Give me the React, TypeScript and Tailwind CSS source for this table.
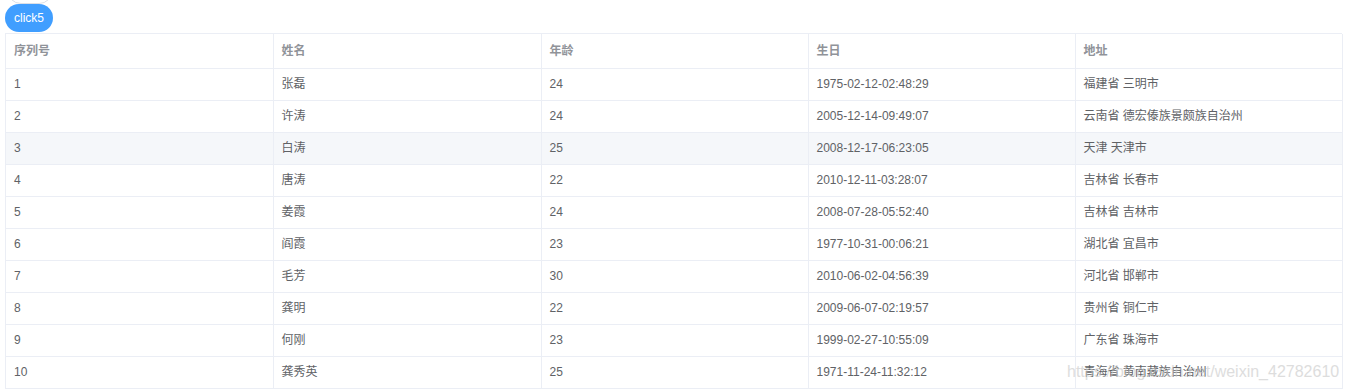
import React from "react";

const rows = [
  ["1", "张磊", "24", "1975-02-12-02:48:29", "福建省 三明市"],
  ["2", "许涛", "24", "2005-12-14-09:49:07", "云南省 德宏傣族景颇族自治州"],
  ["3", "白涛", "25", "2008-12-17-06:23:05", "天津 天津市"],
  ["4", "唐涛", "22", "2010-12-11-03:28:07", "吉林省 长春市"],
  ["5", "姜霞", "24", "2008-07-28-05:52:40", "吉林省 吉林市"],
  ["6", "阎霞", "23", "1977-10-31-00:06:21", "湖北省 宜昌市"],
  ["7", "毛芳", "30", "2010-06-02-04:56:39", "河北省 邯郸市"],
  ["8", "龚明", "22", "2009-06-07-02:19:57", "贵州省 铜仁市"],
  ["9", "何刚", "23", "1999-02-27-10:55:09", "广东省 珠海市"],
  ["10", "龚秀英", "25", "1971-11-24-11:32:12", "青海省 黄南藏族自治州"],
];

const headers = ["序列号", "姓名", "年龄", "生日", "地址"];

export default function App() {
  return (
    <div
      className="relative w-[1347px] h-[391px] bg-white overflow-hidden"
      style={{ fontFamily: '"Liberation Sans", "Noto Sans CJK SC", sans-serif' }}
    >
      <div className="ml-[7px] h-[4px] overflow-hidden flex items-end">
        <div className="w-[46px] h-[28px] shrink-0 rounded-full border border-[#dcdfe6] bg-white" />
      </div>
      <div className="ml-[5px]">
        <button className="h-[28px] w-[48px] rounded-full bg-[#409eff] text-white text-[12px] leading-none flex items-center justify-center">
          click5
        </button>
      </div>
      <div className="ml-[5px] mt-[1px] w-[1337px] border-l border-t border-[#ebeef5]">
        <table className="table-fixed border-collapse w-full text-[12px]">
          <colgroup>
            <col className="w-[267px]" />
            <col className="w-[268px]" />
            <col className="w-[267px]" />
            <col className="w-[267px]" />
            <col className="w-[267px]" />
          </colgroup>
          <thead>
            <tr className="h-[34px]">
              {headers.map((h) => (
                <th
                  key={h}
                  className="text-left font-bold text-[#909399] pl-[8px] border-r border-b border-[#ebeef5] align-middle"
                >
                  {h}
                </th>
              ))}
            </tr>
          </thead>
          <tbody>
            {rows.map((r, i) => (
              <tr key={i} className={`h-[32px] ${i === 2 ? "bg-[#f5f7fa]" : "bg-white"}`}>
                {r.map((c, j) => (
                  <td
                    key={j}
                    className="text-left text-[#606266] pl-[8px] border-r border-b border-[#ebeef5] align-middle whitespace-nowrap"
                  >
                    {c}
                  </td>
                ))}
              </tr>
            ))}
          </tbody>
        </table>
      </div>
      <div className="absolute left-[1067px] top-[360px] text-[16px] text-[#c8c8c8] opacity-60 whitespace-nowrap pointer-events-none">
        https://blog.csdn.net/weixin_42782610
      </div>
    </div>
  );
}
